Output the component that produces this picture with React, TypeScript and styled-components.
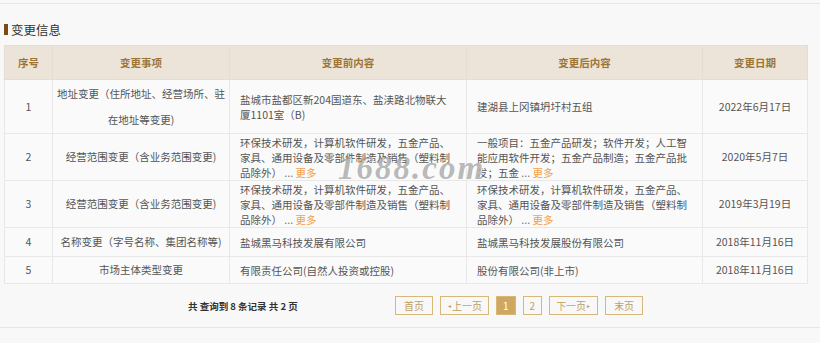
import styled, { createGlobalStyle } from "styled-components";

const GlobalStyle = createGlobalStyle`
  html, body {
    margin: 0;
    padding: 0;
    background: #f8f8f8;
    font-family: "Noto Sans CJK SC", "Noto Sans", sans-serif;
  }
`;

const Page = styled.div`
  position: relative;
  width: 820px;
  height: 343px;
  padding-top: 3px;
  box-sizing: border-box;
  overflow: hidden;
`;

const Section = styled.section`
  border-top: 1px solid #e6e6e6;
  border-bottom: 1px solid #e6e6e6;
  padding: 0 13px 0 4px;
`;

const Title = styled.h3`
  display: flex;
  align-items: center;
  gap: 3px;
  margin: 0;
  height: 41px;
  padding-top: 9px;
  box-sizing: border-box;
  font-size: 12.5px;
  font-weight: normal;
  color: #333;
`;

const TitleBar = styled.span`
  display: block;
  width: 4px;
  height: 11px;
  background: #7b4a17;
`;

const Table = styled.table`
  width: 803px;
  table-layout: fixed;
  border-collapse: collapse;
  font-size: 10.5px;
  color: #555;
`;

const Th = styled.th`
  height: 33px;
  padding: 0;
  background: #ece4d8;
  border: 1px solid #e4ddd2;
  color: #9c7536;
  font-weight: bold;
  text-align: center;
`;

const Td = styled.td<{ $content?: boolean }>`
  padding: ${(p) => (p.$content ? "0 14px 0 10px" : "0 3px")};
  background: #fafafa;
  border: 1px solid #e8e8e8;
  text-align: ${(p) => (p.$content ? "left" : "center")};
  line-height: ${(p) => (p.$content ? "15px" : "26px")};
  vertical-align: middle;
`;

const Ellipsis = styled.span`
  color: #777;
`;

const More = styled.a`
  color: #f3a04b;
  text-decoration: none;
  cursor: pointer;
`;

const Footer = styled.div`
  display: flex;
  align-items: center;
  height: 43px;
  padding-left: 184px;
`;

const Summary = styled.div`
  width: 207px;
  font-size: 9.5px;
  font-weight: bold;
  color: #333;
`;

const Pager = styled.div`
  display: flex;
  gap: 7px;
`;

const PageBtn = styled.span<{ $active?: boolean; $pad?: number }>`
  display: flex;
  align-items: center;
  justify-content: center;
  height: 19px;
  padding: 0 ${(p) => p.$pad ?? 8}px;
  box-sizing: border-box;
  border: 1px solid #d6b97a;
  background: ${(p) => (p.$active ? "#cfa760" : "transparent")};
  color: ${(p) => (p.$active ? "#fff" : "#bf9f5f")};
  font-size: 10px;
  line-height: 1;
`;

const Arrow = styled.span`
  font-size: 6px;
  margin: 0 1px;
`;

const Watermark = styled.div`
  position: absolute;
  left: 338px;
  top: 150px;
  font-family: "Liberation Serif", "DejaVu Serif", serif;
  font-style: italic;
  font-weight: bold;
  font-size: 33px;
  letter-spacing: 2px;
  color: rgba(125, 125, 125, 0.55);
  text-shadow: 1px 1px 0 rgba(255, 255, 255, 0.8);
  pointer-events: none;
`;

type Row = {
  no: number;
  item: string;
  before: string;
  beforeMore?: boolean;
  after: string;
  afterMore?: boolean;
  date: string;
  height: number;
};

const rows: Row[] = [
  {
    no: 1,
    item: "地址变更（住所地址、经营场所、驻在地址等变更)",
    before: "盐城市盐都区新204国道东、盐渎路北物联大厦1101室（B)",
    after: "建湖县上冈镇坍圩村五组",
    date: "2022年6月17日",
    height: 54,
  },
  {
    no: 2,
    item: "经营范围变更（含业务范围变更)",
    before: "环保技术研发，计算机软件研发，五金产品、家具、通用设备及零部件制造及销售（塑料制品除外）",
    beforeMore: true,
    after: "一般项目：五金产品研发；软件开发；人工智能应用软件开发；五金产品制造；五金产品批发；五金",
    afterMore: true,
    date: "2020年5月7日",
    height: 47,
  },
  {
    no: 3,
    item: "经营范围变更（含业务范围变更)",
    before: "环保技术研发，计算机软件研发，五金产品、家具、通用设备及零部件制造及销售（塑料制品除外）",
    beforeMore: true,
    after: "环保技术研发，计算机软件研发，五金产品、家具、通用设备及零部件制造及销售（塑料制品除外）",
    afterMore: true,
    date: "2019年3月19日",
    height: 47,
  },
  {
    no: 4,
    item: "名称变更（字号名称、集团名称等)",
    before: "盐城黑马科技发展有限公司",
    after: "盐城黑马科技发展股份有限公司",
    date: "2018年11月16日",
    height: 29,
  },
  {
    no: 5,
    item: "市场主体类型变更",
    before: "有限责任公司(自然人投资或控股)",
    after: "股份有限公司(非上市)",
    date: "2018年11月16日",
    height: 27,
  },
];

const ContentCell = ({ text, more }: { text: string; more?: boolean }) => (
  <Td $content>
    {text}
    {more && (
      <>
        <Ellipsis> ... </Ellipsis>
        <More>更多</More>
      </>
    )}
  </Td>
);

export default function App() {
  return (
    <Page>
      <GlobalStyle />
      <Section>
        <Title>
          <TitleBar />
          变更信息
        </Title>
        <Table>
          <colgroup>
            <col style={{ width: 48 }} />
            <col style={{ width: 177 }} />
            <col style={{ width: 237 }} />
            <col style={{ width: 236 }} />
            <col style={{ width: 105 }} />
          </colgroup>
          <thead>
            <tr>
              <Th>序号</Th>
              <Th>变更事项</Th>
              <Th>变更前内容</Th>
              <Th>变更后内容</Th>
              <Th>变更日期</Th>
            </tr>
          </thead>
          <tbody>
            {rows.map((row) => (
              <tr key={row.no} style={{ height: row.height }}>
                <Td>{row.no}</Td>
                <Td>{row.item}</Td>
                <ContentCell text={row.before} more={row.beforeMore} />
                <ContentCell text={row.after} more={row.afterMore} />
                <Td>{row.date}</Td>
              </tr>
            ))}
          </tbody>
        </Table>
        <Footer>
          <Summary>共 查询到 8 条记录 共 2 页</Summary>
          <Pager>
            <PageBtn>首页</PageBtn>
            <PageBtn $pad={6}>
              <Arrow>◂</Arrow>上一页
            </PageBtn>
            <PageBtn $active $pad={6}>1</PageBtn>
            <PageBtn $pad={6}>2</PageBtn>
            <PageBtn $pad={6}>
              下一页<Arrow>▸</Arrow>
            </PageBtn>
            <PageBtn>末页</PageBtn>
          </Pager>
        </Footer>
      </Section>
      <Watermark>1688.com</Watermark>
    </Page>
  );
}
